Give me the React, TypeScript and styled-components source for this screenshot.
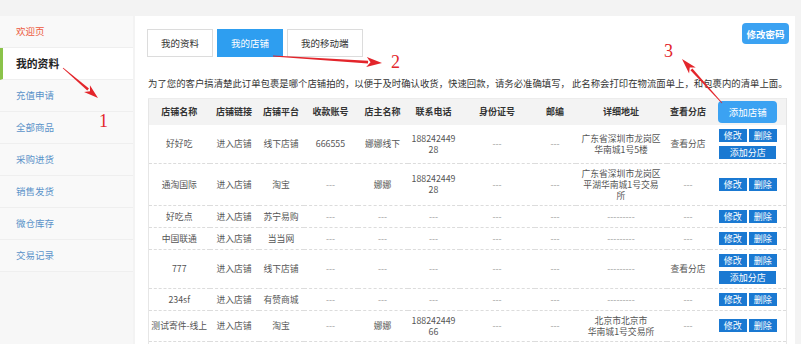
import React from "react";
import styled, { createGlobalStyle, css } from "styled-components";

const Global = createGlobalStyle`
  html, body { margin: 0; padding: 0; background: #f3f3f3; }
  body { font-family: "Noto Sans CJK SC", "Noto Sans", sans-serif; }
  * { box-sizing: border-box; }
`;

const Page = styled.div`
  position: relative;
  display: flex;
  height: 344px;
  padding-top: 16px;
  overflow: hidden;
`;

const Sidebar = styled.nav`
  width: 133px;
  flex: none;
  margin-right: 2px;
  background: #f7f7f7;
  display: flex;
  flex-direction: column;
`;

const NavItem = styled.div<{ $active?: boolean; $home?: boolean }>`
  height: 32px;
  line-height: 31px;
  padding-left: 16px;
  font-size: 9.5px;
  color: #5b93c9;
  background: #f9f9f9;
  border-bottom: 1px solid #efefef;
  ${(p) =>
    p.$home &&
    css`
      color: #ec5a3e;
    `}
  ${(p) =>
    p.$active &&
    css`
      background: #fff;
      color: #222;
      font-weight: bold;
      font-size: 10.8px;
      border-left: 3px solid #8bc34a;
      padding-left: 13px;
    `}
`;

const Main = styled.main`
  flex: 1;
  margin-right: 6px;
  background: #fff;
  padding: 7px 6px 0 13px;
  overflow: hidden;
`;

const TopRow = styled.div`
  display: flex;
  justify-content: space-between;
  align-items: flex-start;
`;

const Tabs = styled.div`
  display: flex;
  gap: 4px;
  margin-top: 6px;
  margin-left: -1px;
`;

const Tab = styled.div<{ $active?: boolean }>`
  height: 28px;
  line-height: 26px;
  padding: 0 13px;
  font-size: 9.5px;
  color: #333;
  background: #fff;
  border: 1px solid #dcdcdc;
  ${(p) =>
    p.$active &&
    css`
      background: #2e9ef0;
      border-color: #2e9ef0;
      color: #fff;
    `}
`;

const PrimaryButton = styled.button<{ $w: number; $h: number; $bold?: boolean }>`
  width: ${(p) => p.$w}px;
  height: ${(p) => p.$h}px;
  border: none;
  border-radius: 4px;
  background: #3ba2f2;
  color: #fff;
  font-family: inherit;
  font-size: 9.5px;
  font-weight: ${(p) => (p.$bold ? "bold" : "normal")};
  padding: 0;
`;

const Notice = styled.p`
  margin: 19px 0 0;
  line-height: 14px;
  font-size: 9.4px;
  color: #333;
  white-space: nowrap;
`;

const Table = styled.table`
  margin-top: 8px;
  width: 638px;
  table-layout: fixed;
  border-collapse: collapse;
  border-left: 1px solid #e6e6e6;
  border-right: 1px solid #e6e6e6;
  border-top: 1px solid #ececec;
`;

const HeadCell = styled.th`
  height: 26px;
  padding: 0;
  background: #f3f3f3;
  font-size: 9px;
  font-weight: bold;
  color: #333;
  text-align: center;
  vertical-align: middle;
`;

const Row = styled.tr`
  border-bottom: 1px dashed #dcdcdc;
`;

const Cell = styled.td<{ $muted?: boolean }>`
  padding: 4px 0;
  font-size: 8.8px;
  line-height: 11px;
  color: ${(p) => (p.$muted ? "#9a9a9a" : "#555")};
  text-align: center;
  vertical-align: middle;
  white-space: pre-line;
`;

const Actions = styled.div`
  display: flex;
  flex-wrap: wrap;
  justify-content: center;
  gap: 4px 2px;
  width: 58px;
  margin: 0 auto;
`;

const SmallButton = styled.span<{ $wide?: boolean }>`
  display: block;
  width: ${(p) => (p.$wide ? 57 : 28)}px;
  height: 13px;
  line-height: 13px;
  background: #1a79d2;
  color: #fff;
  font-size: 9px;
  text-align: center;
`;

const Overlay = styled.svg`
  position: absolute;
  left: 0;
  top: 0;
  pointer-events: none;
`;

const widths = [61, 49, 45, 54, 50, 52, 75, 41, 91, 43, 77];
const heads = ["店铺名称", "店铺链接", "店铺平台", "收款账号", "店主名称", "联系电话", "身份证号", "邮编", "详细地址", "查看分店"];

type Shop = {
  cells: string[];
  branch: boolean;
};

const D = "---";
const shops: Shop[] = [
  { cells: ["好好吃", "进入店铺", "线下店铺", "666555", "娜娜线下", "188242449\n28", D, D, "广东省深圳市龙岗区\n华南城1号5楼", "查看分店"], branch: true },
  { cells: ["通淘国际", "进入店铺", "淘宝", D, "娜娜", "188242449\n28", D, D, "广东省深圳市龙岗区\n平湖华南城1号交易\n所", D], branch: false },
  { cells: ["好吃点", "进入店铺", "苏宁易购", D, D, D, D, D, "---------", D], branch: false },
  { cells: ["中国联通", "进入店铺", "当当网", D, D, D, D, D, "---------", D], branch: false },
  { cells: ["777", "进入店铺", "线下店铺", D, D, D, D, D, "---------", "查看分店"], branch: true },
  { cells: ["234sf", "进入店铺", "有赞商城", D, D, D, D, D, "---------", D], branch: false },
  { cells: ["测试寄件-线上", "进入店铺", "淘宝", D, "娜娜", "188242449\n66", D, D, "北京市北京市\n华南城1号交易所", D], branch: false },
  { cells: ["", "", "", "", "", "", "", "", "", ""], branch: false },
];

const nav = ["欢迎页", "我的资料", "充值申请", "全部商品", "采购进货", "销售发货", "微仓库存", "交易记录"];

function Arrow({ x1, y1, x2, y2, head = 13, half = 4.5 }: { x1: number; y1: number; x2: number; y2: number; head?: number; half?: number }) {
  const dx = x2 - x1;
  const dy = y2 - y1;
  const len = Math.hypot(dx, dy);
  const ux = dx / len;
  const uy = dy / len;
  const nx = -uy;
  const ny = ux;
  const bx = x2 - ux * head;
  const by = y2 - uy * head;
  const shaft = [
    [x1 + nx * 0.4, y1 + ny * 0.4],
    [bx + nx * 1.3, by + ny * 1.3],
    [bx - nx * 1.3, by - ny * 1.3],
    [x1 - nx * 0.4, y1 - ny * 0.4],
  ];
  const tip = [
    [x2, y2],
    [bx + nx * half - ux * 1.5, by + ny * half - uy * 1.5],
    [bx + ux * 2.5, by + uy * 2.5],
    [bx - nx * half - ux * 1.5, by - ny * half - uy * 1.5],
  ];
  const pts = (a: number[][]) => a.map((p) => p.join(",")).join(" ");
  return (
    <g fill="#e3252b">
      <polygon points={pts(shaft)} />
      <polygon points={pts(tip)} />
    </g>
  );
}

export default function App() {
  return (
    <>
      <Global />
      <Page>
        <Sidebar>
          {nav.map((n, i) => (
            <NavItem key={n} $home={i === 0} $active={i === 1}>
              {n}
            </NavItem>
          ))}
        </Sidebar>
        <Main>
          <TopRow>
            <Tabs>
              <Tab>我的资料</Tab>
              <Tab $active>我的店铺</Tab>
              <Tab>我的移动端</Tab>
            </Tabs>
            <PrimaryButton $w={47} $h={21} $bold>
              修改密码
            </PrimaryButton>
          </TopRow>
          <Notice>
            为了您的客户搞清楚此订单包裹是哪个店铺拍的，以便于及时确认收货，快速回款，请务必准确填写， 此名称会打印在物流面单上，和包裹内的清单上面。
          </Notice>
          <Table>
            <colgroup>
              {widths.map((w, i) => (
                <col key={i} style={{ width: w }} />
              ))}
            </colgroup>
            <thead>
              <tr>
                {heads.map((h) => (
                  <HeadCell key={h}>{h}</HeadCell>
                ))}
                <HeadCell>
                  <PrimaryButton $w={59} $h={22}>添加店铺</PrimaryButton>
                </HeadCell>
              </tr>
            </thead>
            <tbody>
              {shops.map((s, r) => (
                <Row key={r}>
                  {s.cells.map((c, i) => (
                    <Cell key={i} $muted={/^-+$/.test(c)}>
                      {c}
                    </Cell>
                  ))}
                  <Cell>
                    <Actions>
                      <SmallButton>修改</SmallButton>
                      <SmallButton>删除</SmallButton>
                      {s.branch && <SmallButton $wide>添加分店</SmallButton>}
                    </Actions>
                  </Cell>
                </Row>
              ))}
            </tbody>
          </Table>
        </Main>
        <Overlay width={801} height={344} viewBox="0 0 801 344">
          <Arrow x1={63} y1={68} x2={98} y2={98} head={13} half={4.5} />
          <Arrow x1={273} y1={56} x2={382} y2={63} head={14} half={5} />
          <Arrow x1={722} y1={103} x2={682} y2={59} head={14} half={4.5} />
          <g fill="#e3252b" fontFamily="'Liberation Serif', serif" fontSize="18">
            <text x={99} y={127}>1</text>
            <text x={391} y={68}>2</text>
            <text x={664} y={57}>3</text>
          </g>
        </Overlay>
      </Page>
    </>
  );
}
